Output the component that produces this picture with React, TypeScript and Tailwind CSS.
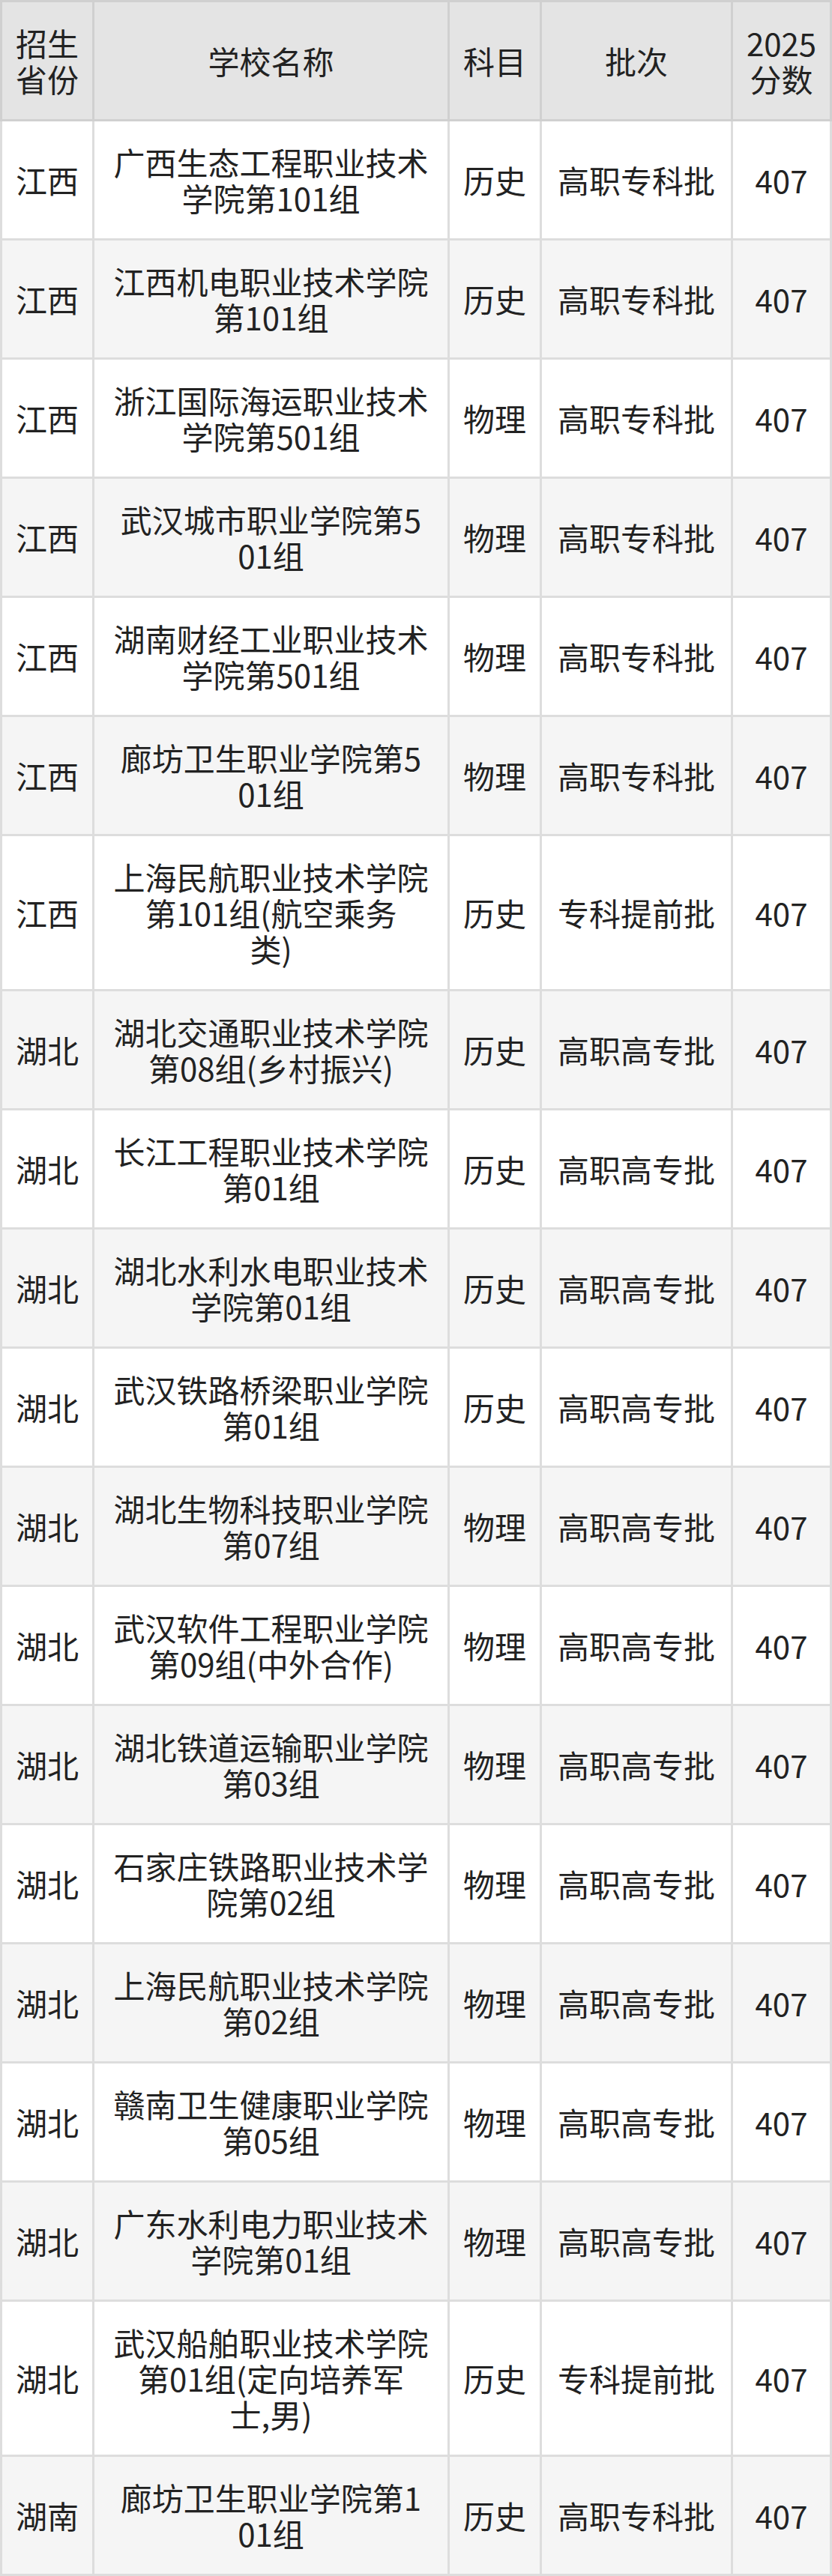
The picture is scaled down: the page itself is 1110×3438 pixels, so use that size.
import React from "react"

type Row = {
    province: string
    school: string[]
    subject: string
    batch: string
    score: string
}

const rows: Row[] = [
    { province: "江西", school: ["广西生态工程职业技术", "学院第101组"], subject: "历史", batch: "高职专科批", score: "407" },
    { province: "江西", school: ["江西机电职业技术学院", "第101组"], subject: "历史", batch: "高职专科批", score: "407" },
    { province: "江西", school: ["浙江国际海运职业技术", "学院第501组"], subject: "物理", batch: "高职专科批", score: "407" },
    { province: "江西", school: ["武汉城市职业学院第5", "01组"], subject: "物理", batch: "高职专科批", score: "407" },
    { province: "江西", school: ["湖南财经工业职业技术", "学院第501组"], subject: "物理", batch: "高职专科批", score: "407" },
    { province: "江西", school: ["廊坊卫生职业学院第5", "01组"], subject: "物理", batch: "高职专科批", score: "407" },
    { province: "江西", school: ["上海民航职业技术学院", "第101组(航空乘务", "类)"], subject: "历史", batch: "专科提前批", score: "407" },
    { province: "湖北", school: ["湖北交通职业技术学院", "第08组(乡村振兴)"], subject: "历史", batch: "高职高专批", score: "407" },
    { province: "湖北", school: ["长江工程职业技术学院", "第01组"], subject: "历史", batch: "高职高专批", score: "407" },
    { province: "湖北", school: ["湖北水利水电职业技术", "学院第01组"], subject: "历史", batch: "高职高专批", score: "407" },
    { province: "湖北", school: ["武汉铁路桥梁职业学院", "第01组"], subject: "历史", batch: "高职高专批", score: "407" },
    { province: "湖北", school: ["湖北生物科技职业学院", "第07组"], subject: "物理", batch: "高职高专批", score: "407" },
    { province: "湖北", school: ["武汉软件工程职业学院", "第09组(中外合作)"], subject: "物理", batch: "高职高专批", score: "407" },
    { province: "湖北", school: ["湖北铁道运输职业学院", "第03组"], subject: "物理", batch: "高职高专批", score: "407" },
    { province: "湖北", school: ["石家庄铁路职业技术学", "院第02组"], subject: "物理", batch: "高职高专批", score: "407" },
    { province: "湖北", school: ["上海民航职业技术学院", "第02组"], subject: "物理", batch: "高职高专批", score: "407" },
    { province: "湖北", school: ["赣南卫生健康职业学院", "第05组"], subject: "物理", batch: "高职高专批", score: "407" },
    { province: "湖北", school: ["广东水利电力职业技术", "学院第01组"], subject: "物理", batch: "高职高专批", score: "407" },
    { province: "湖北", school: ["武汉船舶职业技术学院", "第01组(定向培养军", "士,男)"], subject: "历史", batch: "专科提前批", score: "407" },
    { province: "湖南", school: ["廊坊卫生职业学院第1", "01组"], subject: "历史", batch: "高职专科批", score: "407" },
]

// one block per pre-broken line, so wrapping matches the screenshot exactly
function Lines({ lines }: { lines: string[] }) {
    return (
        <div className="flex flex-col items-center">
            {lines.map((l, i) => (
                <span key={i} className="block h-[48px] whitespace-nowrap">{l}</span>
            ))}
        </div>
    )
}

export default function App() {
    const head = "flex items-center justify-center text-center py-[30px] bg-[#e4e4e4] border-[#d0d0d0] border-t-[3px] border-r-[3px] border-b-[3px]"
    const cell = "flex items-center justify-center text-center py-[30px] border-[#dddddd] border-r-[3px] border-b-[3px]"

    return (
        <div
            className="w-[1110px] bg-white text-[#222222] text-[42px] leading-[48px]"
            style={{ fontFamily: '"Noto Sans CJK SC", "Noto Sans", sans-serif' }}
        >
            <div className="grid grid-cols-[126px_474px_123px_255px_132px]">
                {/* ── Header ── */}
                <div className={`${head} border-l-[3px]`}><Lines lines={["招生", "省份"]} /></div>
                <div className={head}><Lines lines={["学校名称"]} /></div>
                <div className={head}><Lines lines={["科目"]} /></div>
                <div className={head}><Lines lines={["批次"]} /></div>
                <div className={head}><Lines lines={["2025", "分数"]} /></div>

                {/* ── Body rows, striped ── */}
                {rows.map((r, i) => {
                    const bg = i % 2 === 0 ? "bg-white" : "bg-[#f5f5f5]"
                    return (
                        <React.Fragment key={i}>
                            <div className={`${cell} ${bg} border-l-[3px]`}><Lines lines={[r.province]} /></div>
                            <div className={`${cell} ${bg}`}><Lines lines={r.school} /></div>
                            <div className={`${cell} ${bg}`}><Lines lines={[r.subject]} /></div>
                            <div className={`${cell} ${bg}`}><Lines lines={[r.batch]} /></div>
                            <div className={`${cell} ${bg}`}><Lines lines={[r.score]} /></div>
                        </React.Fragment>
                    )
                })}
            </div>
        </div>
    )
}
